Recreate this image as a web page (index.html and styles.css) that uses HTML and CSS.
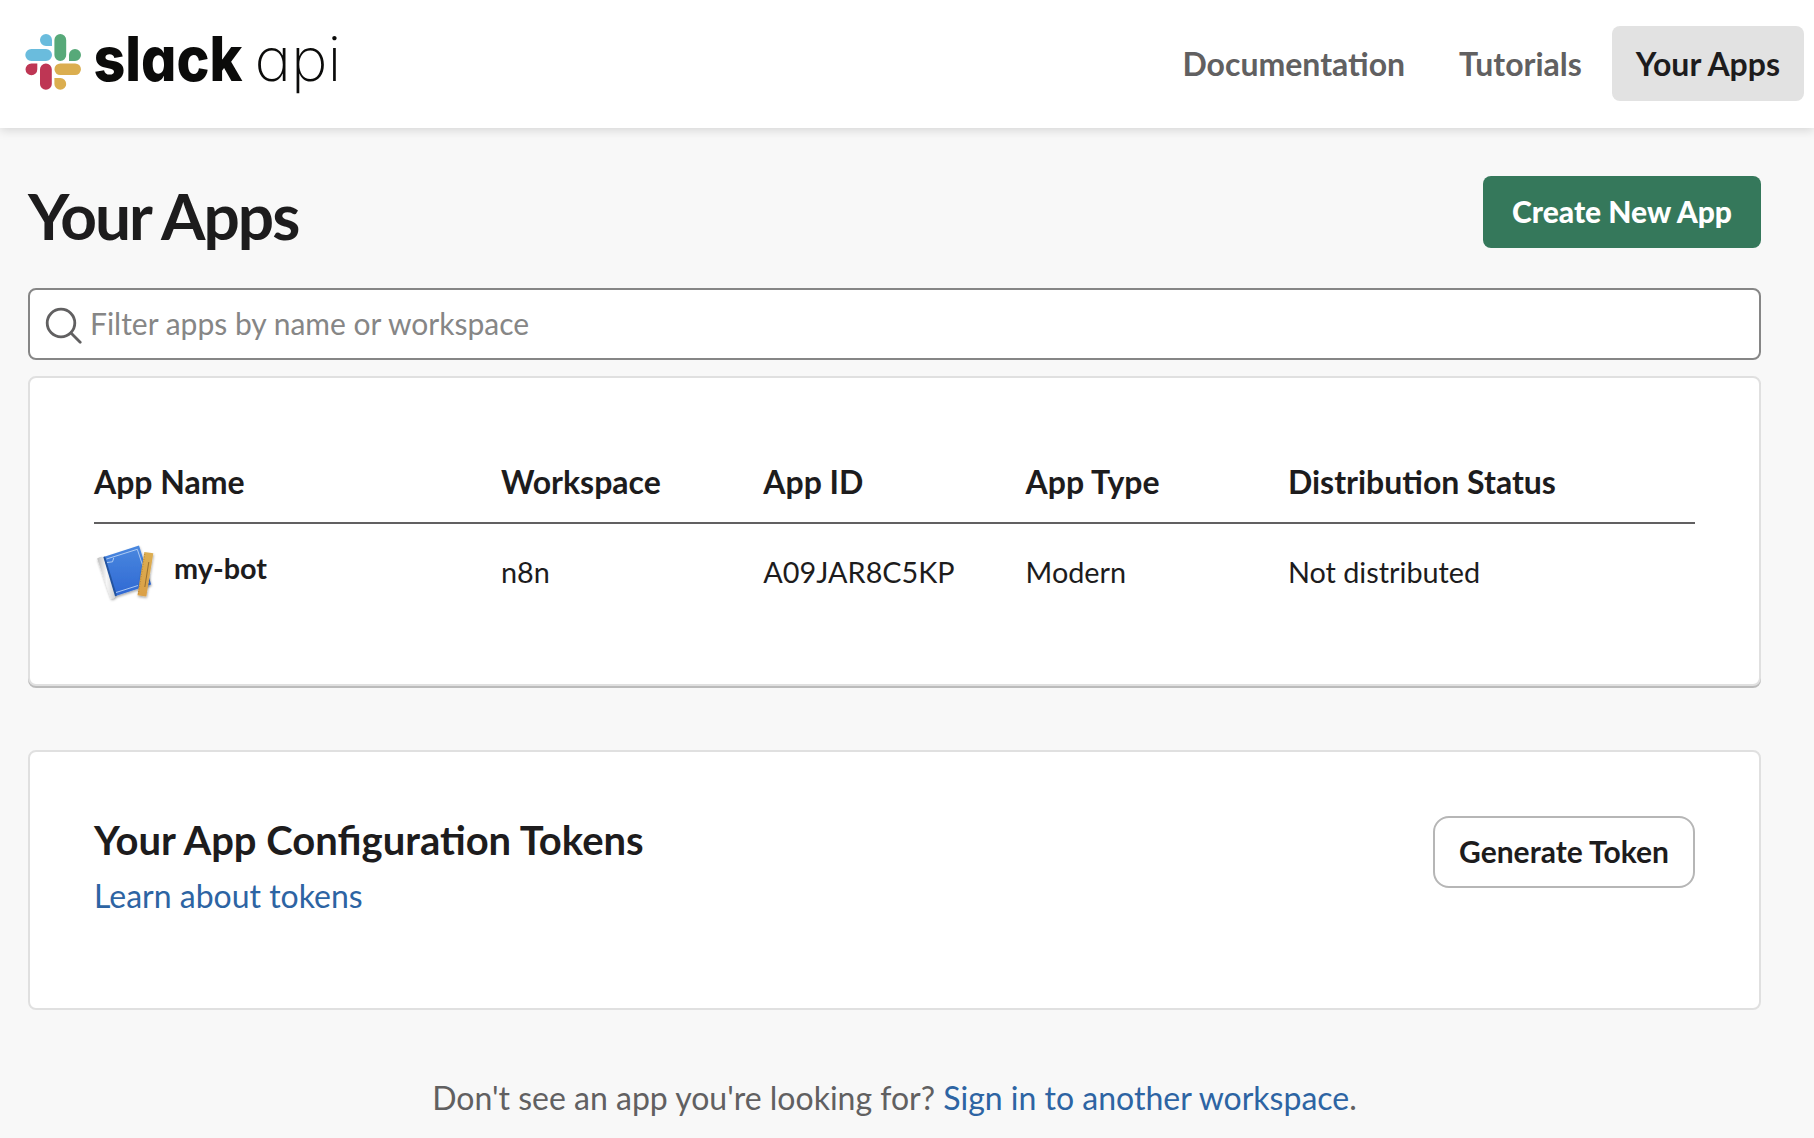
FILE: index.html
```html
<!DOCTYPE html>
<html lang="en">
<head>
<meta charset="utf-8">
<title>Slack API: Your Apps</title>
<link rel="stylesheet" href="styles.css">
</head>
<body>
<header class="header">
  <a class="logo" href="#">
    <svg class="logo-art" width="340" height="128" viewBox="0 0 340 128">
      <path fill="#6abcdd" d="M46 34a6 6 0 0 1 6 6v6h-6a6 6 0 0 1 0-12zM31.300 49h14.700a6 6 0 0 1 0 12h-14.700a6 6 0 0 1 0-12z"/>
      <path fill="#57a979" d="M60.300 34a5.900 5.900 0 0 1 5.900 5.900v15.200a5.900 5.900 0 0 1-11.800 0v-15.200a5.900 5.900 0 0 1 5.900-5.900zM69 61v-6a6 6 0 1 1 6 6z"/>
      <path fill="#dbae4f" d="M60.300 63.400h14.800a5.800 5.800 0 0 1 0 11.700h-14.800a5.800 5.800 0 0 1 0-11.700zM54.400 78h5.900a5.900 5.900 0 1 1-5.900 5.900z"/>
      <path fill="#be3654" d="M45.900 63.400a5.900 5.900 0 0 1 5.900 5.900v14.600a5.900 5.900 0 0 1-11.800 0v-14.600a5.900 5.900 0 0 1 5.900-5.900zM37.300 63.400v5.800a5.900 5.900 0 1 1-5.900-5.800z"/>
      <text class="word-slack" x="93.500" y="81" textLength="149" lengthAdjust="spacingAndGlyphs">slack</text>
      <text class="word-api" x="254.500" y="81" textLength="87" lengthAdjust="spacingAndGlyphs">api</text>
    </svg>
  </a>
  <nav class="nav">
    <a class="nav-link" href="#">Documentation</a>
    <a class="nav-link" href="#">Tutorials</a>
    <a class="nav-link active" href="#">Your Apps</a>
  </nav>
</header>
<main class="main">
  <div class="title-row">
    <h1 class="title">Your Apps</h1>
    <button class="create">Create New App</button>
  </div>
  <label class="search">
    <svg class="search-icon" width="38" height="38" viewBox="0 0 38 38" fill="none" stroke="#616061" stroke-width="2.800" stroke-linecap="round"><circle cx="17" cy="17" r="13.800"/><path d="M27 27l9.200 9.200"/></svg>
    <input class="search-input" type="text" placeholder="Filter apps by name or workspace">
  </label>
  <section class="card apps">
    <div class="row head">
      <span>App Name</span><span>Workspace</span><span>App ID</span><span>App Type</span><span>Distribution Status</span>
    </div>
    <div class="row item">
      <a class="app" href="#">
        <svg class="app-icon" width="64" height="64" viewBox="94 541 64 64">
          <defs>
            <linearGradient id="cover" x1="0" y1="0" x2="0" y2="1"><stop offset="0" stop-color="#4a88df"/><stop offset="1" stop-color="#2f68d3"/></linearGradient>
            <linearGradient id="spine" x1="0" y1="0" x2="1" y2="0"><stop offset="0" stop-color="#bdbdbd"/><stop offset=".5" stop-color="#f7f7f7"/><stop offset="1" stop-color="#cfcfcf"/></linearGradient>
            <linearGradient id="ruler" x1="0" y1="0" x2="0" y2="1"><stop offset="0" stop-color="#dcae52"/><stop offset="1" stop-color="#dba046"/></linearGradient>
            <filter id="soft" x="-20%" y="-20%" width="150%" height="150%"><feDropShadow dx="0.500" dy="1.500" stdDeviation="1" flood-opacity=".35"/></filter>
          </defs>
          <g filter="url(#soft)">
            <path fill="url(#cover)" d="M103.500 557L139 545.500 151.200 584.500 115.500 596z"/>
            <path fill="url(#spine)" d="M97.200 558.500q3-2.400 6.500-1.500L115.800 596q-1.500 2.800-5 2.500z"/>
            <path fill="#24539f" d="M103.300 557l1.800-.6 11.800 39-1.800 1z"/>
          </g>
          <path fill="none" stroke="#b9d3f5" stroke-width=".9" d="M106.500 559L137.300 549.300 148.500 583M116 592.500L138 585.500M107 562.500l5.500-.7 1.300-4"/>
          <g filter="url(#soft)"><path fill="url(#ruler)" d="M144.300 552l9 1.200-7 43.300-8.800-1.200z"/></g>
          <path stroke="#9a7030" stroke-width="1" fill="none" d="M148.800 562l-4 25"/>
          <path stroke="#b78438" stroke-width="1" fill="none" stroke-dasharray="1 1.500" d="M144.800 554l-6.400 40"/>
        </svg>
        <span class="app-name">my-bot</span>
      </a>
      <span>n8n</span><span>A09JAR8C5KP</span><span>Modern</span><span>Not distributed</span>
    </div>
  </section>
  <section class="card tokens">
    <div>
      <h2 class="tokens-title">Your App Configuration Tokens</h2>
      <a class="link" href="#">Learn about tokens</a>
    </div>
    <button class="generate">Generate Token</button>
  </section>
  <p class="footnote">Don't see an app you're looking for? <a class="link" href="#">Sign in to another workspace</a>.</p>
</main>
</body>
</html>
```

FILE: styles.css
```css
* { box-sizing: border-box; }
body {
  margin: 0;
  height: 1138px;
  overflow: hidden;
  background: #f8f8f8;
  color: #1d1c1d;
  font: 32px/40px Lato, "Liberation Sans", sans-serif;
}
a { color: inherit; text-decoration: none; }
h1, h2, p { margin: 0; }
button { font-family: inherit; cursor: pointer; white-space: nowrap; padding: 0 0 2px; }

.header {
  display: flex;
  justify-content: space-between;
  height: 128px;
  padding-right: 10px;
  background: #fff;
  box-shadow: 0 2px 10px rgba(0, 0, 0, .15);
}
.logo-art { display: block; }
.word-slack { font: 800 62px Inter, sans-serif; font-feature-settings: "cv11"; fill: #0b0b0a; }
.word-api { font: 200 61px Inter, sans-serif; font-feature-settings: "cv11"; fill: #0b0b0a; }
.nav { display: flex; gap: 6px; padding-top: 26px; }
.nav-link {
  height: 75px;
  padding: 0 24px;
  border-radius: 8px;
  color: #616061;
  font-weight: 700;
  line-height: 76px;
}
.nav-link.active { background: #e2e2e2; color: #1d1c1d; }

.main { width: 1733px; margin-left: 28px; padding-top: 48px; }
.title-row { display: flex; justify-content: space-between; height: 112px; }
.title { font-size: 64px; line-height: 80px; font-weight: 700; letter-spacing: -2px; }
.create {
  width: 278px;
  height: 72px;
  border: 0;
  border-radius: 8px;
  background: #35785b;
  color: #fff;
  font-size: 30px;
  font-weight: 900;
}
.search {
  display: flex;
  align-items: center;
  height: 72px;
  padding-left: 14px;
  border: 2px solid #868686;
  border-radius: 8px;
  background: #fff;
}
.search-icon { flex: none; margin-top: 2px; }
.search-input {
  flex: 1;
  height: 66px;
  margin-left: 8px;
  padding: 0 0 2px;
  border: 0;
  outline: 0;
  background: transparent;
  font: 30px/40px Lato, sans-serif;
}
.search-input::placeholder { color: #868686; opacity: 1; }

.card { border: 2px solid #e0e0e0; border-radius: 8px; background: #fff; padding: 64px; }
.apps { height: 310px; margin-top: 16px; padding-top: 84px; box-shadow: 0 2px 0 #bbb; }
.row { display: grid; grid-template-columns: 407px 262.300px 262.300px 262.300px 1fr; }
.head { height: 62px; border-bottom: 2px solid #616061; font-weight: 700; }
.item { padding-top: 17px; font-size: 28.800px; line-height: 62px; }
.app { display: flex; }
.app-name { margin-left: 16px; font-weight: 700; line-height: 54px; }

.tokens { display: flex; justify-content: space-between; height: 260px; margin-top: 64px; }
.tokens-title { font-size: 40px; line-height: 48px; font-weight: 700; }
.tokens .link { display: block; margin-top: 12px; }
.link { color: #2d64a3; }
.generate {
  width: 262px;
  height: 72px;
  border: 2px solid #b6b6b6;
  border-radius: 16px;
  background: #fff;
  color: #1d1c1d;
  font-size: 30px;
  font-weight: 700;
}
.footnote { margin-top: 68px; text-align: center; color: #616061; }
```
